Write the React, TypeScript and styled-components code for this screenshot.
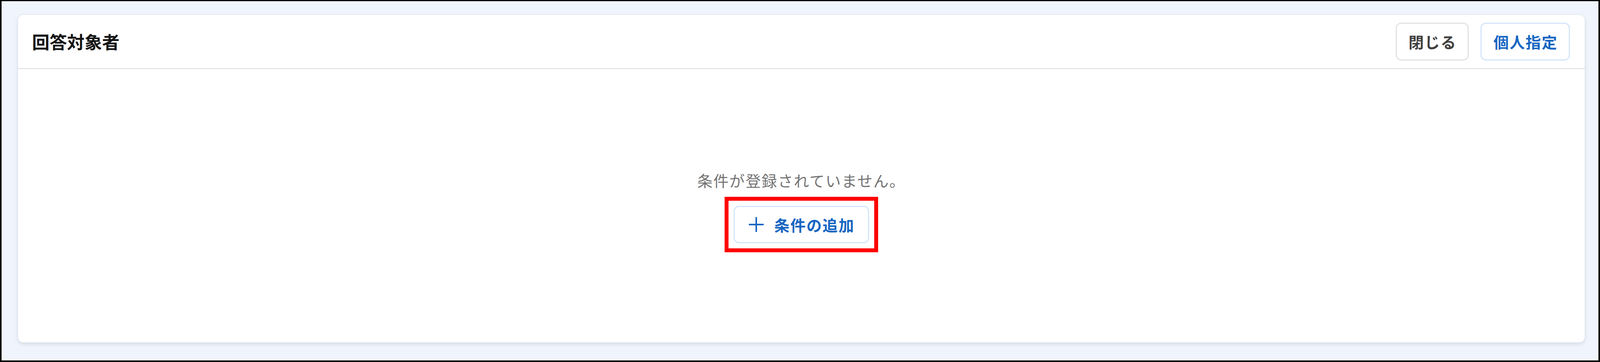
import React from 'react'
import styled, {createGlobalStyle} from 'styled-components'

const GlobalStyle = createGlobalStyle`
    html, body {
        margin: 0;
        padding: 0;
    }
    body {
        font-family: "Noto Sans CJK JP", "Noto Sans", sans-serif;
        background: #f0f5fd;
    }
    * {
        box-sizing: border-box;
    }
`

type Tone = 'neutral' | 'primary'

// plus glyph used on the "add condition" button
const PlusIcon = () => (
    <svg width="38" height="38" viewBox="0 0 38 38" aria-hidden="true">
        <path d="M0 19h38M19 0v38" stroke="currentColor" strokeWidth="4" fill="none" />
    </svg>
)

/**
 * Respondents panel with no conditions registered yet
 */
export default function App() {
    return (
        <>
            <GlobalStyle />
            <Frame>
                <Card>
                    <Header>
                        <Title>回答対象者</Title>
                        <Actions>
                            <HeaderButton tone="neutral">閉じる</HeaderButton>
                            <HeaderButton tone="primary">個人指定</HeaderButton>
                        </Actions>
                    </Header>
                    <Body>
                        <EmptyMessage>条件が登録されていません。</EmptyMessage>
                        {/* red annotation frame around the add button */}
                        <Highlight>
                            <AddButton>
                                <PlusIcon />
                                <span>条件の追加</span>
                            </AddButton>
                        </Highlight>
                    </Body>
                </Card>
            </Frame>
        </>
    )
}

const Frame = styled.div`
    display: flex;
    width: 100%;
    height: 100vh;
    padding: 35px 35px 46px 42px;
    border: 4px solid #000;
    border-top-width: 3px;
    background: #f0f5fd;
    overflow: hidden;
`

const Card = styled.section`
    flex: 1;
    display: flex;
    flex-direction: column;
    min-width: 0;
    background: #fff;
    border-radius: 14px;
    box-shadow: 0 0 0 1px rgba(20, 30, 60, 0.05), 0 4px 12px rgba(20, 30, 60, 0.12);
`

const Header = styled.header`
    display: flex;
    flex: none;
    align-items: center;
    justify-content: space-between;
    height: 139px;
    padding: 0 38px 0 36px;
    border-bottom: 3px solid #e4e6eb;
`

const Title = styled.h2`
    margin: 0;
    font-size: 44.8px;
    font-weight: 700;
    color: #151515;
    line-height: 1.5;
`

const Actions = styled.div`
    display: flex;
    gap: 30px;
`

const HeaderButton = styled.button<{tone: Tone}>`
    height: 97px;
    padding: 0 28px 0 30px;
    border: 3px solid ${p => (p.tone === 'primary' ? '#d4e5fb' : '#e3e3e3')};
    border-radius: 14px;
    background: #fff;
    color: ${p => (p.tone === 'primary' ? '#1766c2' : '#404040')};
    font-family: inherit;
    font-size: 39.2px;
    font-weight: 700;
    letter-spacing: 2px;
    cursor: pointer;
`

const Body = styled.div`
    flex: 1;
    display: flex;
    flex-direction: column;
    align-items: center;
    justify-content: center;
`

const EmptyMessage = styled.p`
    margin: 0 0 36px;
    font-size: 39.2px;
    line-height: 59px;
    letter-spacing: 2px;
    color: #737373;
`

const Highlight = styled.div`
    position: relative;
    display: inline-flex;
    &::after {
        content: '';
        position: absolute;
        inset: -23px;
        border: 10px solid #ff0000;
        pointer-events: none;
    }
`

const AddButton = styled.button`
    display: inline-flex;
    align-items: center;
    gap: 27px;
    height: 96px;
    padding: 0 34px 0 36px;
    border: 3px solid #d4e5fb;
    border-radius: 14px;
    background: #fff;
    color: #1766c2;
    font-family: inherit;
    font-size: 39.2px;
    font-weight: 700;
    letter-spacing: 2px;
    cursor: pointer;
`
